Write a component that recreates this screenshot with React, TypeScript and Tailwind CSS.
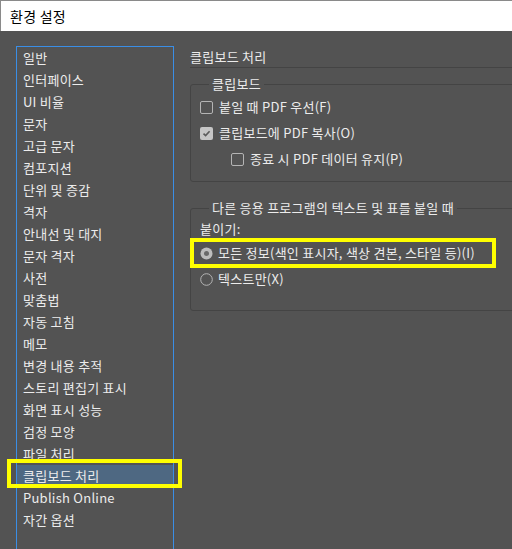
const items = [
  "일반",
  "인터페이스",
  "UI 비율",
  "문자",
  "고급 문자",
  "컴포지션",
  "단위 및 증감",
  "격자",
  "안내선 및 대지",
  "문자 격자",
  "사전",
  "맞춤법",
  "자동 고침",
  "메모",
  "변경 내용 추적",
  "스토리 편집기 표시",
  "화면 표시 성능",
  "검정 모양",
  "파일 처리",
  "클립보드 처리",
  "Publish Online",
  "자간 옵션",
];

const font = { fontFamily: '"Noto Sans CJK KR", "Noto Sans", sans-serif' };

const Checkbox = ({ checked }: { checked?: boolean }) =>
  checked ? (
    <span className="flex h-[13px] w-[13px] items-center justify-center rounded-[2px] bg-[#c6c6c6]">
      <svg width="9" height="9" viewBox="0 0 9 9">
        <path d="M1.5 4.6 L3.6 6.6 L7.6 2.2" fill="none" stroke="#5a5a5a" strokeWidth="1.6" />
      </svg>
    </span>
  ) : (
    <span className="block h-[13px] w-[13px] rounded-[2px] border border-[#b4b4b4]" />
  );

const Radio = ({ checked }: { checked?: boolean }) => (
  <svg width="13" height="13" viewBox="0 0 13 13">
    {checked ? (
      <>
        <circle cx="6.5" cy="6.5" r="6" fill="#bdbdbd" />
        <circle cx="6.5" cy="6.5" r="2.5" fill="#6a6a6a" />
      </>
    ) : (
      <circle cx="6.5" cy="6.5" r="5.8" fill="none" stroke="#b4b4b4" strokeWidth="1" />
    )}
  </svg>
);

export default function App() {
  return (
    <div
      className="h-[549px] w-[512px] overflow-hidden bg-[#535353] text-[13px] tracking-[0.25px] text-[#ececec]"
      style={font}
    >
      <div className="flex h-[31px] items-center border-l border-t border-[#8a8a8a] bg-white pl-[9px] text-[14px] text-black">
        환경 설정
      </div>

      <div className="flex">
        <div className="ml-4 mt-[15px] h-[560px] w-[158px] shrink-0 border border-[#3a8ee6]">
          {items.map((it) => {
            const sel = it === "클립보드 처리";
            return (
              <div
                key={it}
                className={`relative h-[22px] pl-[6px] leading-[22px] ${sel ? "bg-[#4e6882]" : ""}`}
              >
                {it}
                {sel && (
                  <div className="absolute left-[-10px] top-[-6px] h-[29px] w-[175px] border-4 border-[#ffff00]" />
                )}
              </div>
            );
          })}
        </div>

        <div className="ml-4 w-[340px] shrink-0 pt-[16px]">
          <div className="h-[21px] border-b border-[#444444] leading-[20px]">클립보드 처리</div>

          <fieldset className="mt-[7px] h-[107px] rounded-[3px] border border-[#444444] pl-[9px]">
            <legend className="ml-[9px] px-[3px] leading-[18px]">클립보드</legend>
            <div className="mt-[1px] flex h-[26px] items-center gap-[6px]">
              <Checkbox />
              <span>붙일 때 PDF 우선(F)</span>
            </div>
            <div className="flex h-[26px] items-center gap-[6px]">
              <Checkbox checked />
              <span>클립보드에 PDF 복사(O)</span>
            </div>
            <div className="flex h-[26px] items-center gap-[6px] pl-[31px]">
              <Checkbox />
              <span>종료 시 PDF 데이터 유지(P)</span>
            </div>
          </fieldset>

          <fieldset className="mt-[17px] h-[112px] rounded-[3px] border border-[#444444] pl-[9px]">
            <legend className="ml-[9px] px-[3px] leading-[18px]">다른 응용 프로그램의 텍스트 및 표를 붙일 때</legend>
            <div className="mt-[1px] h-[22px] leading-[22px]">붙이기:</div>
            <div className="relative flex h-[26px] items-center gap-[5px]">
              <Radio checked />
              <span>모든 정보(색인 표시자, 색상 견본, 스타일 등)(I)</span>
              <div className="absolute left-[-10px] top-[-2px] h-[30px] w-[306px] border-4 border-[#ffff00]" />
            </div>
            <div className="flex h-[26px] items-center gap-[5px]">
              <Radio />
              <span>텍스트만(X)</span>
            </div>
          </fieldset>
        </div>
      </div>
    </div>
  );
}
